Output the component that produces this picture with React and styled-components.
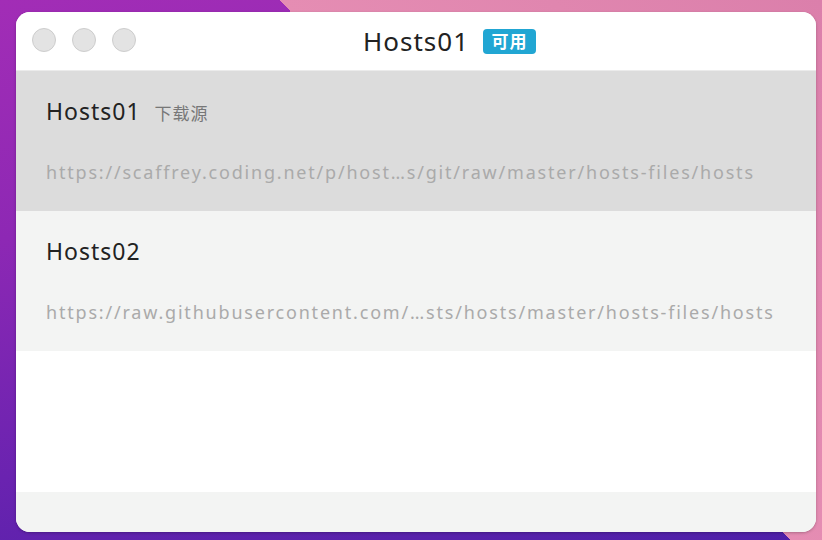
import * as React from 'react';
import styled, { createGlobalStyle } from 'styled-components';

const GlobalStyle = createGlobalStyle`
  html, body {
    margin: 0;
    padding: 0;
  }
  body {
    width: 822px;
    height: 540px;
    overflow: hidden;
    font-family: "Noto Sans", "Noto Sans CJK SC", sans-serif;
  }
`;

const hosts = [
    {
        name: 'Hosts01',
        tag: '下载源',
        url: 'https://scaffrey.coding.net/p/host…s/git/raw/master/hosts-files/hosts',
        active: true,
    },
    {
        name: 'Hosts02',
        url: 'https://raw.githubusercontent.com/…sts/hosts/master/hosts-files/hosts',
    },
];

const App = () => {
    return (
        <Desktop>
            <GlobalStyle />
            <Window>
                <TitleBar>
                    <Lights>
                        <Light />
                        <Light />
                        <Light />
                    </Lights>
                    <Title>
                        Hosts01
                        <Badge>可用</Badge>
                    </Title>
                </TitleBar>

                <List>
                    {hosts.map((h) => (
                        <Item key={h.name} $active={h.active}>
                            <ItemHead>
                                <ItemName>{h.name}</ItemName>
                                {h.tag && <ItemTag>{h.tag}</ItemTag>}
                            </ItemHead>
                            <ItemUrl>{h.url}</ItemUrl>
                        </Item>
                    ))}
                </List>

                <Footer />
            </Window>
        </Desktop>
    );
};

export default App;

const Desktop = styled.div`
display: flex;
align-items: flex-start;
width: 822px;
height: 540px;
padding: 12px 0 0 16px;
box-sizing: border-box;
background:
  linear-gradient(46.6deg, transparent 59.3%, #e58db3 59.3%, #db7fab 100%),
  linear-gradient(170deg, #a22db6 0%, #8d28b4 35%, #6a23b0 70%, #4d20a8 100%);
`;

const Window = styled.div`
display: flex;
flex-direction: column;
width: 800px;
height: 520px;
background: #ffffff;
border-radius: 14px;
overflow: hidden;
box-shadow: 0 1px 3px rgba(0,0,0,0.25);
`;

const TitleBar = styled.div`
position: relative;
display: flex;
align-items: center;
justify-content: center;
height: 58px;
flex-shrink: 0;
background: #ffffff;
border-bottom: 1px solid #ebebeb;
`;

const Lights = styled.div`
position: absolute;
left: 16px;
top: 16px;
display: flex;
gap: 16px;
`;

const Light = styled.span`
width: 22px;
height: 22px;
border-radius: 50%;
background: #e3e3e3;
border: 1px solid #cdcdcd;
`;

const Title = styled.div`
position: relative;
font-size: 26px;
line-height: 30px;
color: #222;
letter-spacing: 1px;
`;

const Badge = styled.span`
position: absolute;
left: calc(100% + 14px);
top: 3px;
display: inline-flex;
align-items: center;
justify-content: center;
width: 53px;
height: 25px;
border-radius: 4px;
background: #21a6d3;
color: #fff;
font-size: 17px;
font-weight: 700;
line-height: 1;
letter-spacing: 1px;
`;

const List = styled.div`
display: flex;
flex-direction: column;
flex: 1;
`;

const Item = styled.div`
display: flex;
flex-direction: column;
height: 140px;
box-sizing: border-box;
padding: 24px 30px 0;
background: ${(p) => (p.$active ? '#dcdcdc' : '#f3f4f3')};
`;

const ItemHead = styled.div`
display: flex;
align-items: baseline;
gap: 14px;
height: 34px;
`;

const ItemName = styled.span`
font-size: 23px;
color: #222;
letter-spacing: 1px;
`;

const ItemTag = styled.span`
font-size: 17px;
color: #777;
letter-spacing: 1px;
`;

const ItemUrl = styled.div`
margin-top: 31px;
font-size: 18px;
color: #aaaaaa;
white-space: nowrap;
letter-spacing: 1.8px;
`;

const Footer = styled.div`
height: 40px;
flex-shrink: 0;
background: #f3f4f3;
`;
